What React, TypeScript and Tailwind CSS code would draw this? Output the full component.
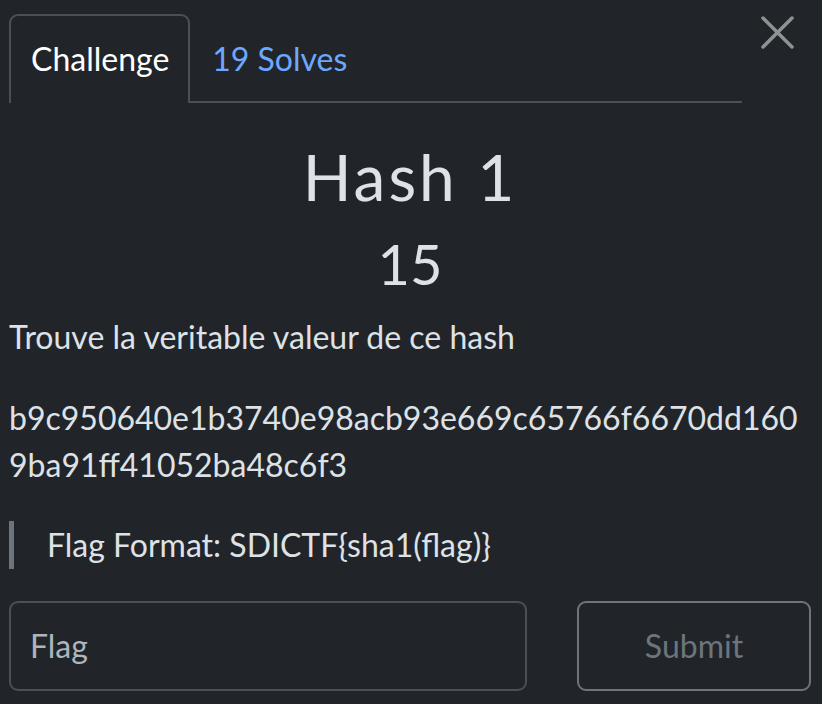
import React from "react";

export default function App() {
  return (
    <div
      className="w-[822px] h-[704px] bg-[#212529] text-[#dee2e6] overflow-hidden pl-[9px] pr-[11px]"
      style={{ fontFamily: "Lato, 'Noto Sans', sans-serif" }}
    >
      <div className="flex items-start pt-[14px]">
        <div className="w-[733px] flex border-b-2 border-[#495057]">
          <div className="pl-[20px] pr-[19px] pt-[19px] pb-[16px] border-2 border-b-0 border-[#495057] rounded-t-[9px] text-[32px] leading-[48px] text-white -mb-[2px] bg-[#212529]">
            Challenge
          </div>
          <div className="px-[20px] pt-[19px] pb-[16px] border-2 border-transparent text-[32px] leading-[48px] text-[#6ea8fe]">
            19 Solves
          </div>
        </div>
        <div className="flex-1 flex justify-center pt-[2px] pl-[1px]">
          <svg width="33" height="33" viewBox="0 0 33 33">
            <path d="M2 2 L31 31 M31 2 L2 31" stroke="#8f9193" strokeWidth="3.5" strokeLinecap="round" />
          </svg>
        </div>
      </div>

      <div className="mt-[35px] text-center text-[64px] leading-[77px] tracking-[3px] text-[#dee2e6]">
        Hash 1
      </div>
      <div className="mt-[15px] text-center text-[56px] leading-[67px] text-[#dee2e6]">
        15
      </div>
      <p className="mt-[16px] text-[32px] leading-[48px] mb-[33px]">
        Trouve la veritable valeur de ce hash
      </p>
      <p className="text-[32px] leading-[47px] break-all mb-[33px] w-[800px]">
        b9c950640e1b3740e98acb93e669c65766f6670dd1609ba91ff41052ba48c6f3
      </p>
      <blockquote className="border-l-[5px] border-[#6c757d] pl-[33px] text-[32px] leading-[48px]">
        Flag Format: SDICTF{"{"}sha1(flag){"}"}
      </blockquote>

      <div className="mt-[32px] flex gap-[50px]">
        <div className="w-[518px] h-[90px] border-2 border-[#495057] rounded-[9px] flex items-center px-[19px] text-[32px] text-[#adb5bd]">
          Flag
        </div>
        <div className="flex-1 h-[90px] border-2 border-[#6c757d] rounded-[9px] flex items-center justify-center text-[32px] text-[#6c757d]">
          Submit
        </div>
      </div>
    </div>
  );
}
